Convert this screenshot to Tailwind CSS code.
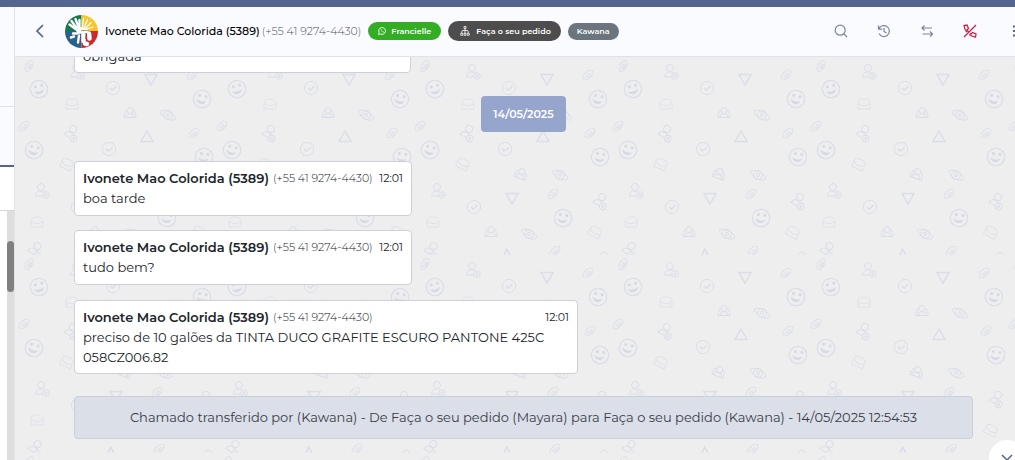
<!DOCTYPE html>
<html lang="pt-BR">
  <head>
    <meta charset="UTF-8" />
    <meta name="viewport" content="width=device-width, initial-scale=1.0" />
    <title>Atendimento</title>
    <script src="https://cdn.jsdelivr.net/npm/@tailwindcss/browser@4"></script>
  </head>

  <body class="flex h-screen flex-col overflow-hidden bg-white font-['Montserrat','Inter',sans-serif] text-[#212529]">
    <div class="h-[7px] shrink-0 bg-[#54658f]"></div>

    <div class="flex min-h-0 flex-1">
      <!-- conversation list, collapsed -->
      <aside class="flex w-[15px] shrink-0 flex-col border-r border-[#dee2ea] bg-white">
        <div class="h-[100px] border-b border-[#dee2ea] bg-[#fafbff]"></div>
        <div class="h-[60px] border-b-2 border-[#54658f] bg-[#fafbff]"></div>
        <div class="h-[44px] border-b border-[#d5d7dc]"></div>
        <div class="flex flex-1 justify-end">
          <div class="w-[7px] bg-[#dedede] pt-[30px]">
            <div class="h-[51px] rounded-full bg-[#808080]"></div>
          </div>
        </div>
      </aside>

      <main class="relative flex min-w-0 flex-1 flex-col">
        <header class="flex h-[50px] shrink-0 items-center overflow-hidden border-b border-[#dee2ea] bg-[#fafbff] pb-px pl-[18px]">
          <button aria-label="Voltar" class="flex h-8 w-[14px] items-center justify-center text-[#54658f]">
            <svg class="h-[14px] w-[10px]" viewBox="0 0 10 14" fill="none" stroke="currentColor" stroke-width="1.700"><path d="M8 1 2 7l6 6" /></svg>
          </button>
          <svg class="ml-[18px] h-[33px] w-[33px] shrink-0" viewBox="0 0 33 33">
            <clipPath id="round"><circle cx="16.500" cy="16.500" r="16.500" /></clipPath>
            <g clip-path="url(#round)">
              <path fill="#16794b" d="M0 0h16.500v16H0z" />
              <path fill="#f6c62b" d="M16.500 0H33v16H16.500z" />
              <path fill="#2a6089" d="M0 16h16.500v17H0z" />
              <path fill="#cb2a2e" d="M16.500 16H33v17H16.500z" />
              <g stroke="#fff" stroke-linecap="round" fill="none">
                <path stroke-width="2.400" d="m4.500 9.500 6 4.500M6.500 6l5 7M10.500 4l3 8M14.500 5v7" />
                <path stroke-width="1.300" d="m18.500 3.500-1 9M22.500 4.500 19.500 12M26 7.500 21 13M28 12l-6 2" />
                <path stroke-width="2.400" d="M8 18.500h4M6 22.500l3-1M14 20.500l-1 7" />
                <path stroke-width="4.500" d="M18.500 19.500v6.500M24 18.500l.5 5M20 28.500l2 .5" />
              </g>
              <path fill="#fff" d="M10.500 14.500q6-5 12.500 0l.5 1.500-1 2-10 1z" />
              <path stroke="#c3a73e" stroke-width="1" d="M16 15.500h8" />
              <path stroke="#cb2a2e" stroke-width="1.500" d="m21.500 19-.5 5" />
            </g>
          </svg>
          <h1 class="ml-[7px] whitespace-nowrap text-[11px] font-medium text-black">Ivonete Mao Colorida (5389)</h1>
          <span class="ml-[2px] whitespace-nowrap text-[11px] font-light text-[#50555c]">(+55 41 9274-4430)</span>

          <span class="ml-[7px] flex h-[18px] shrink-0 items-center gap-[5px] rounded-full bg-[#33ad24] px-[10px] text-[8px] font-semibold text-white">
            <svg class="h-2 w-2" viewBox="0 0 16 16" fill="none" stroke="currentColor" stroke-width="1.800"><path d="m1 15 1.200-3.800A6.800 6.800 0 1 1 5 13.900z" /><path d="M5.400 4.600c-.9 2.400 2.800 6.400 5.400 6.300.9-.4 1.100-1 .9-1.600L9.800 8.500l-.8.900C8 9 7.200 8.200 6.700 7.200l.7-1-.7-1.600z" fill="currentColor" stroke="none" /></svg>
            Francielle
          </span>
          <span class="ml-[7px] flex h-5 shrink-0 items-center gap-[6px] rounded-full bg-[#4d4d4d] pr-[10px] pl-3 text-[8px] font-semibold text-white">
            <svg class="h-[10px] w-[10px]" viewBox="0 0 20 20" fill="none" stroke="currentColor" stroke-width="1.600"><path d="M8 1h4v4H8zM10 5v10M3.500 14v-2.500Q3.500 9 6 9h8q2.500 0 2.500 2.500V14M1.500 14.500h4v4h-4zM8 14.500h4v4H8zM14.500 14.500h4v4h-4z" /></svg>
            Faça o seu pedido
          </span>
          <span class="ml-[7px] flex h-[17px] shrink-0 items-center rounded-full bg-[#6a757e] px-[9px] text-[8px] font-semibold text-white">Kawana</span>

          <div class="-mr-[19px] ml-auto flex shrink-0 text-[#7b8498]">
            <button aria-label="Buscar" class="flex h-8 w-[43px] items-center justify-center">
              <svg class="h-[14px] w-[14px]" viewBox="0 0 14 14" fill="none" stroke="currentColor" stroke-width="1.200"><circle cx="6.200" cy="6.200" r="5" /><path d="m9.800 9.800 3.200 3.200" /></svg>
            </button>
            <button aria-label="Histórico" class="flex h-8 w-[43px] items-center justify-center">
              <svg class="h-[14px] w-[14px]" viewBox="0 0 14 14" fill="none" stroke="currentColor" stroke-width="1.200"><path d="M1.500 1.500v3.700h3.700M1.800 5A5.500 5.500 0 1 1 2 9.600M7 4v3.500L9.500 9" /></svg>
            </button>
            <button aria-label="Transferir" class="flex h-8 w-[43px] items-center justify-center">
              <svg class="h-[14px] w-[14px]" viewBox="0 0 14 14" fill="none" stroke="currentColor" stroke-width="1.200"><path d="M12 4H2M4.500 1.500 2 4l2.500 2.500M2.500 10h10M10 7.500l2.500 2.500-2.500 2.500" /></svg>
            </button>
            <button aria-label="Encerrar" class="flex h-8 w-[43px] items-center justify-center text-[#d0214b]">
              <svg class="h-[14px] w-[14px]" viewBox="0 0 14 14" fill="none" stroke="currentColor" stroke-width="1.300"><path d="M13 1 1 13M3.800 8.200C2.200 6.300 1.200 4 1 1.500L4 1l1.500 3.500L4 5.700c.4.8.8 1.400 1.400 2M6.200 10.500c1.900 1.500 4 2.300 6.300 2.500l.5-3-3.500-1.500-1.200 1.500q-.7-.3-1.200-.7" /></svg>
            </button>
            <button aria-label="Mais opções" class="flex h-8 w-[43px] items-center pl-[22px]">
              <svg class="h-3 w-[14px]" viewBox="0 0 14 12" fill="none" stroke="#54658f" stroke-width="2"><path d="M0 1.500h3M0 6h3M0 10.500h3M5 1.500h9M5 6h9M5 10.500h9" /></svg>
            </button>
          </div>
        </header>

        <section class="relative flex min-h-0 flex-1 flex-col justify-end overflow-hidden bg-[#eeeeee] pr-[42px] pb-[21px] pl-[59px]">
          <!-- wallpaper, one 198px tile repeated -->
          <svg class="absolute inset-0 h-full w-full" aria-hidden="true">
            <defs>
              <g id="clip"><ellipse rx="6" ry="3.200" transform="rotate(-42)" /><path d="m-3 2.500 5-4.500M-1 3l4.500-4" /></g>
              <g id="smile" stroke-width="1.300"><circle r="8.700" /><path stroke="none" fill="#d5d9e5" d="M-5.500 1C-2 3 2 3 4.500 1 4 6-3.500 7-5.500 1Z" /><circle cx="-3" cy="-3" r="1.500" stroke="none" fill="#d5d9e5" /><circle cx="3.500" cy="-3" r="1.500" stroke="none" fill="#d5d9e5" /></g>
              <g id="user"><circle cx="-1" cy="-4" r="3.500" /><path d="M1 5h-7.500Q-6 0-2 0h2Q1.500 0 2.500 1.500" /><circle cx="4" cy="4" r="3.300" /><path d="M4 2v4M2.300 4h3.400" /></g>
              <g id="tri" stroke-width="1.500"><path d="M-6-4.500H6L0 6Z" /></g>
              <g id="check"><circle r="6.600" /><path stroke-width="1.400" d="m-3 0 2.300 2.300L3.500-2" /></g>
              <g id="mail" stroke="#e0e2e9"><path d="M-6 5v-6q0-4 6-4t6 4v6zM-6-.5l4 2h4l4-2" /></g>
              <g id="team"><circle cy="-2.500" r="3" /><path d="M-4 4.500q0-4 4-4t4 4zM-3-2.500q-3 0-2 3Q-6.500 2-6 4.500h12Q6.500 2 5 .5q1-3-2-3" /></g>
              <g id="eye"><path d="M-8-3.500Q-6-5.500-2-4.500 6-2 8 3 7 6 2 5-5 3-8-3.500Z" /><circle r="4.500" /><circle r="1.600" /></g>
              <pattern id="tile" width="198" height="198" patternUnits="userSpaceOnUse">
                <g fill="none" stroke="#dbdee8" stroke-width="1">
                  <use href="#clip" x="177" y="18" />
                  <use href="#clip" transform="translate(14 9) rotate(-18)" />
                  <use href="#clip" x="179" y="76" />
                  <use href="#clip" x="9" y="69" />
                  <use href="#clip" x="142" y="137" />
                  <use href="#clip" x="144" y="194" />
                  <use href="#smile" transform="translate(187 42) rotate(12)" />
                  <use href="#smile" transform="translate(24 32) rotate(-15)" />
                  <use href="#smile" transform="translate(189 100) rotate(8)" />
                  <use href="#smile" transform="translate(19 93) rotate(15)" />
                  <use href="#smile" transform="translate(152 161) rotate(8)" />
                  <use href="#user" x="62" y="15" />
                  <use href="#user" transform="translate(57 76) rotate(28)" />
                  <use href="#user" x="27" y="134" />
                  <use href="#user" transform="translate(190 144) rotate(28)" />
                  <use href="#user" transform="translate(21 193) rotate(35)" />
                  <use href="#tri" x="136" y="22" />
                  <use href="#tri" transform="translate(132 80) rotate(180)" />
                  <use href="#tri" x="101" y="141" />
                  <path stroke-width="1.500" d="m93 198 2.500-6 3.500 6" />
                  <path d="M189 198q4-6 8 0" />
                  <use href="#check" x="98" y="31" />
                  <use href="#check" transform="translate(94 92) rotate(14)" />
                  <use href="#check" x="63" y="150" />
                  <use href="#mail" x="57" y="47" />
                  <use href="#mail" transform="translate(52 107) rotate(25)" />
                  <use href="#mail" x="22" y="165" />
                  <use href="#mail" transform="translate(184 175) rotate(28)" />
                  <use href="#team" x="115" y="56" />
                  <use href="#team" transform="translate(110 117) rotate(20)" />
                  <use href="#team" x="80" y="175" />
                  <use href="#eye" x="153" y="58" />
                  <use href="#eye" x="149" y="118" />
                  <use href="#eye" x="118" y="177" />
                </g>
              </pattern>
            </defs>
            <rect width="100%" height="100%" fill="url(#tile)" />
          </svg>

          <div class="relative flex flex-col items-start text-[13px] leading-[20px]">
            <article class="w-[337px] rounded border border-[#cdd0d8] bg-white px-2 pb-[6px]">
              <p>obrigada</p>
            </article>

            <time class="mt-[23px] flex h-9 items-center self-center rounded bg-[#96a5cc] px-3 pb-px text-[11px] font-semibold text-white">14/05/2025</time>

            <article class="mt-[29px] min-w-[338px] rounded border border-[#cdd0d8] bg-white px-2 pt-[7px] pb-[7px]">
              <header class="flex items-center leading-[19px]">
                <b class="font-semibold">Ivonete Mao Colorida (5389)</b>
                <span class="ml-1 text-[11px] font-light">(+55 41 9274-4430)</span>
                <time class="ml-auto text-[11px]">12:01</time>
              </header>
              <p>boa tarde</p>
            </article>

            <article class="mt-[14px] min-w-[338px] rounded border border-[#cdd0d8] bg-white px-2 pt-[7px] pb-[7px]">
              <header class="flex items-center leading-[19px]">
                <b class="font-semibold">Ivonete Mao Colorida (5389)</b>
                <span class="ml-1 text-[11px] font-light">(+55 41 9274-4430)</span>
                <time class="ml-auto text-[11px]">12:01</time>
              </header>
              <p>tudo bem?</p>
            </article>

            <article class="mt-[15px] max-w-[504px] rounded border border-[#cdd0d8] bg-white px-2 pt-[7px] pb-[6px]">
              <header class="flex items-center leading-[19px]">
                <b class="font-semibold">Ivonete Mao Colorida (5389)</b>
                <span class="ml-1 text-[11px] font-light">(+55 41 9274-4430)</span>
                <time class="ml-auto text-[11px]">12:01</time>
              </header>
              <p>preciso de 10 galões da TINTA DUCO GRAFITE ESCURO PANTONE 425C 058CZ006.82</p>
            </article>

            <p class="mt-[22px] flex min-h-[43px] w-full items-center justify-center rounded border border-[#c9cfde] bg-[#dbdfe8] pb-px text-[#383d49]">
              Chamado transferido por (Kawana) - De Faça o seu pedido (Mayara) para Faça o seu pedido (Kawana) - 14/05/2025 12:54:53
            </p>
          </div>
        </section>

        <button aria-label="Ir para o fim" class="absolute -right-[10px] -bottom-4 flex h-9 w-9 justify-center rounded-full bg-white pt-[14px] text-[#54658f]">
          <svg class="h-[7px] w-3" viewBox="0 0 12 7" fill="none" stroke="currentColor" stroke-width="1.500"><path d="m1 1 5 5 5-5" /></svg>
        </button>
      </main>
    </div>
  </body>
</html>
